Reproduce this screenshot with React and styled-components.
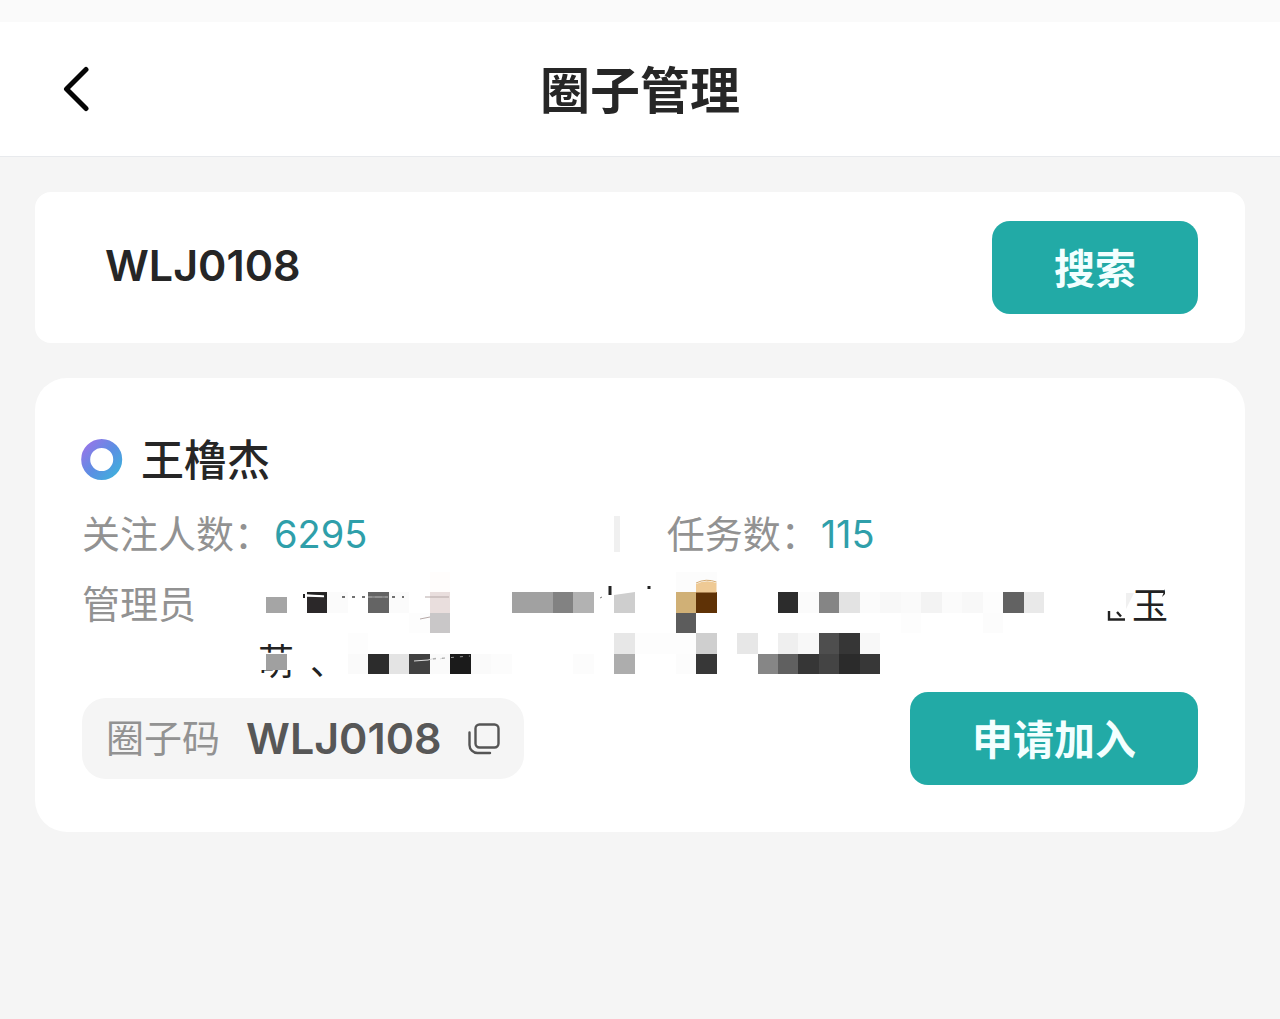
import React, { useState } from "react";
import styled, { createGlobalStyle } from "styled-components";

const circle = {
  name: "王橹杰",
  code: "WLJ0108",
  stats: [
    { label: "关注人数：", value: 6295 },
    { label: "任务数：", value: 115 },
  ],
};

// [column, row, colour, columns wide]
const mosaicCells = [
  [20, 0, "#fcfcfc", 2],
  [8, 0, "#fffdfc", 1],
  [3, 1, "#fbfbfb", 1],
  [6, 1, "#fbfbfb", 1],
  [2, 1, "#2b2829", 1],
  [5, 1, "#646464", 1],
  [8, 1, "#e9dedd", 1],
  [12, 1, "#a1a1a1", 2],
  [14, 1, "#828282", 1],
  [15, 1, "#b2b2b2", 1],
  [17, 1, "#cecece", 1],
  [20, 1, "#d0b076", 1],
  [21, 1, "#5f3206", 1],
  [25, 1, "#2c2c2c", 1],
  [26, 1, "#fbfbfb", 1],
  [27, 1, "#858585", 1],
  [28, 1, "#e3e3e3", 1],
  [29, 1, "#fbfbfb", 1],
  [30, 1, "#f8f8f8", 1],
  [31, 1, "#fafafa", 1],
  [32, 1, "#f3f3f3", 1],
  [33, 1, "#fbfbfb", 1],
  [34, 1, "#f8f8f8", 1],
  [35, 1, "#fdfdfd", 1],
  [36, 1, "#626262", 1],
  [37, 1, "#e9e9e9", 1],
  [7, 2, "#fdfdfd", 1],
  [8, 2, "#c9c7c8", 1],
  [20, 2, "#5c5c5c", 1],
  [31, 2, "#fdfdfd", 1],
  [35, 2, "#fcfcfc", 1],
  [4, 3, "#fdfdfd", 1],
  [17, 3, "#e7e7e7", 1],
  [18, 3, "#fdfdfd", 3],
  [21, 3, "#cfcfcf", 1],
  [23, 3, "#e7e7e7", 1],
  [25, 3, "#efefef", 1],
  [26, 3, "#f8f8f8", 1],
  [27, 3, "#4e4e4e", 1],
  [28, 3, "#363636", 1],
  [29, 3, "#f8f8f8", 1],
  [4, 4, "#fafafa", 1],
  [5, 4, "#2c2c2c", 1],
  [6, 4, "#e4e4e4", 1],
  [7, 4, "#414141", 1],
  [8, 4, "#fafafa", 1],
  [9, 4, "#1b1b1b", 1],
  [10, 4, "#fafafa", 1],
  [11, 4, "#fcfcfc", 1],
  [15, 4, "#fcfcfc", 1],
  [17, 4, "#adadad", 1],
  [20, 4, "#fcfcfc", 1],
  [21, 4, "#373737", 1],
  [24, 4, "#868686", 1],
  [25, 4, "#606060", 1],
  [26, 4, "#363636", 1],
  [27, 4, "#444444", 1],
  [28, 4, "#2b2b2b", 1],
  [29, 4, "#373737", 1],
];

const CELL = 20.48;

const GlobalStyle = createGlobalStyle`
  * {
    box-sizing: border-box;
  }

  body {
    margin: 0;
    background: #f5f5f5;
    color: #262626;
    font-family: Inter, "Noto Sans CJK SC", sans-serif;
  }

  button,
  input {
    font-family: inherit;
  }
`;

const Header = styled.header`
  display: grid;
  grid-template-columns: 80px 1fr 80px;
  align-items: center;
  height: 157px;
  padding: 0 36px;
  border-top: 22px solid #fafafa;
  border-bottom: 1px solid #e8eaed;
  background: #fff;
`;

const BackButton = styled.button`
  display: flex;
  justify-content: center;
  padding: 0;
  border: 0;
  background: none;
  cursor: pointer;
`;

const Title = styled.h1`
  margin: 0;
  padding-top: 4px;
  font-size: 50px;
  line-height: 72px;
  font-weight: 700;
  text-align: center;
`;

const Content = styled.main`
  display: flex;
  flex-direction: column;
  gap: 35px;
  padding: 35px;
`;

const SearchCard = styled.form`
  display: flex;
  align-items: center;
  justify-content: space-between;
  padding: 29px 47px 29px 70px;
  border-radius: 16px;
  background: #fff;
`;

const SearchInput = styled.input`
  flex: 1;
  min-width: 0;
  height: 62px;
  padding: 0 0 6px;
  border: 0;
  outline: 0;
  background: none;
  color: #262626;
  font-size: 43px;
  font-weight: 600;
`;

const PrimaryButton = styled.button`
  padding: 3px 62px 0;
  border: 0;
  border-radius: 18px;
  background: #22aaa6;
  color: #f3ffff;
  font-size: 41px;
  line-height: 90px;
  font-weight: 700;
  white-space: nowrap;
  cursor: pointer;
`;

const CircleCard = styled.section`
  padding: 54px 47px 47px;
  border-radius: 32px;
  background: #fff;
`;

const NameRow = styled.div`
  display: flex;
  align-items: center;
  gap: 18px;
`;

const Name = styled.h2`
  margin: 0;
  font-size: 43px;
  line-height: 56px;
  font-weight: 500;
`;

const Stats = styled.dl`
  display: grid;
  grid-template-columns: 9fr 10fr;
  margin: 18px 0 14px;
`;

const Stat = styled.div`
  display: flex;
  align-items: center;
  gap: 2px;
  font-size: 38px;
  line-height: 56px;

  & + & {
    padding-left: 56px;
    background: linear-gradient(#f0f0f0, #f0f0f0) 3px center / 6px 36px no-repeat;
  }

  dt {
    color: #929292;
  }

  dd {
    margin: 0;
    color: #2f9faa;
  }
`;

const Managers = styled.div`
  display: flex;
  line-height: 56px;
`;

const Label = styled.span`
  color: #929292;
  font-size: 38px;
`;

const ManagerNames = styled.div`
  position: relative;
  flex: 1;
  margin: 0 30px 0 62px;
  padding-top: 2px;
  color: #222;
  font-size: 36px;
`;

const ManagerLine = styled.div`
  display: flex;
  justify-content: ${({ $end }) => ($end ? "flex-end" : "flex-start")};
  gap: 16px;
`;

const Mosaic = styled.svg`
  position: absolute;
  top: -4px;
  left: 8px;
  overflow: visible;
`;

const CardFooter = styled.div`
  display: flex;
  align-items: center;
  justify-content: space-between;
  margin-top: 2px;
`;

const CodeBox = styled.div`
  display: flex;
  align-items: center;
  gap: 26px;
  padding: 12px 24px;
  border-radius: 24px;
  background: #f5f5f5;
  line-height: 57px;
`;

const Code = styled.span`
  color: #575757;
  font-size: 43px;
  font-weight: 600;
`;

const CopyButton = styled.button`
  display: flex;
  padding: 0;
  border: 0;
  background: none;
  cursor: pointer;
`;

const BackIcon = () => (
  <svg width="28" height="46" viewBox="0 0 28 46" fill="none" aria-hidden="true">
    <path
      d="M24 3.5 4.5 23 24 42.5"
      stroke="#050505"
      strokeWidth="5"
      strokeLinecap="round"
      strokeLinejoin="round"
    />
  </svg>
);

const RingIcon = () => (
  <svg width="41" height="42" viewBox="0 0 41 42" fill="none" overflow="visible" aria-hidden="true">
    <defs>
      <linearGradient id="ring" x1="5" y1="6" x2="37" y2="36" gradientUnits="userSpaceOnUse">
        <stop offset="0" stopColor="#9178e8" />
        <stop offset="0.5" stopColor="#5b8fe3" />
        <stop offset="1" stopColor="#3fb0dc" />
      </linearGradient>
    </defs>
    <circle cx="19.700" cy="20.500" r="16" stroke="url(#ring)" strokeWidth="9" />
  </svg>
);

const CopyIcon = () => (
  <svg width="32" height="34" viewBox="0 0 32 34" fill="none" stroke="#555" strokeWidth="2.4" aria-hidden="true">
    <rect x="7.5" y="2.5" width="23" height="23" rx="4" />
    <path d="M1.5 10.5V23a8 8 0 0 0 8 8H22" strokeLinecap="round" />
  </svg>
);

const ManagerMosaic = () => (
  <Mosaic width="922" height="103" viewBox="0 0 922 103" aria-hidden="true">
    <path d="M-8 82h44v16H-8z" fill="#fff" />
    <g shapeRendering="crispEdges">
      {mosaicCells.map(([col, row, color, span]) => (
        <rect
          key={`${col}-${row}`}
          x={col * CELL}
          y={row * CELL}
          width={span * CELL}
          height={CELL}
          fill={color}
        />
      ))}
      <rect x="0" y="25" width="21" height="16" fill="#a5a5a5" />
      <rect x="0" y="82" width="21" height="16" fill="#a0a0a0" />
    </g>
    <path d="M430 20.5V12q10-5 20.5-1v9.5z" fill="#efca95" />
    <path d="M430 11q10-5 20.5-1" stroke="#d5ac74" fill="none" />
    <path d="M41 23.500l17 .5" stroke="#fff" strokeWidth="2.500" fill="none" />
    <path d="M38 22v4" stroke="#222" strokeWidth="2" />
    <path d="M41 21l19 1.500v5" stroke="#222" strokeWidth="2" fill="none" />
    <path d="M76 25h62" stroke="#444" strokeWidth="1.500" strokeDasharray="3 7" />
    <path d="M102 25h20" stroke="#bbb" strokeWidth="1" />
    <path d="M159 25h24M154 47l10-2" stroke="#b6a9a8" strokeWidth="1" />
    <path d="M148 89l14-1 8-2M174 87l3-1" stroke="#ddd" strokeWidth="1" fill="none" />
    <path d="M167 87l37-3" stroke="#999" strokeDasharray="3 6" />
    <path d="M344 14v9M381.500 15.500h3" stroke="#222" strokeWidth="3" />
    <path d="M334 26l2-1" stroke="#777" />
    <path d="M348 20h21l-21 3z" fill="#fff" />
    <path d="M843 39v8.500h16M851 40l4 4.500" stroke="#222" strokeWidth="2.400" fill="none" />
    <path d="M860 21h8l-8 16z" fill="#f0f0f0" />
    <path d="M899 17v5l-3 3z" fill="#222" />
  </Mosaic>
);

export default function App() {
  const [keyword, setKeyword] = useState(circle.code);

  return (
    <>
      <GlobalStyle />
      <Header>
        <BackButton type="button" aria-label="返回">
          <BackIcon />
        </BackButton>
        <Title>圈子管理</Title>
      </Header>

      <Content>
        <SearchCard onSubmit={(e) => e.preventDefault()}>
          <SearchInput
            aria-label="圈子码"
            value={keyword}
            onChange={(e) => setKeyword(e.target.value)}
          />
          <PrimaryButton type="submit">搜索</PrimaryButton>
        </SearchCard>

        <CircleCard>
          <NameRow>
            <RingIcon />
            <Name>{circle.name}</Name>
          </NameRow>

          <Stats>
            {circle.stats.map((stat) => (
              <Stat key={stat.label}>
                <dt>{stat.label}</dt>
                <dd>{stat.value}</dd>
              </Stat>
            ))}
          </Stats>

          <Managers>
            <Label>管理员</Label>
            <ManagerNames>
              <ManagerLine $end>玉</ManagerLine>
              <ManagerLine>
                <span>萌</span>
                <span>、</span>
              </ManagerLine>
              <ManagerMosaic />
            </ManagerNames>
          </Managers>

          <CardFooter>
            <CodeBox>
              <Label>圈子码</Label>
              <Code>{circle.code}</Code>
              <CopyButton
                type="button"
                aria-label="复制"
                onClick={() => navigator.clipboard?.writeText(circle.code)}
              >
                <CopyIcon />
              </CopyButton>
            </CodeBox>
            <PrimaryButton type="button">申请加入</PrimaryButton>
          </CardFooter>
        </CircleCard>
      </Content>
    </>
  );
}
